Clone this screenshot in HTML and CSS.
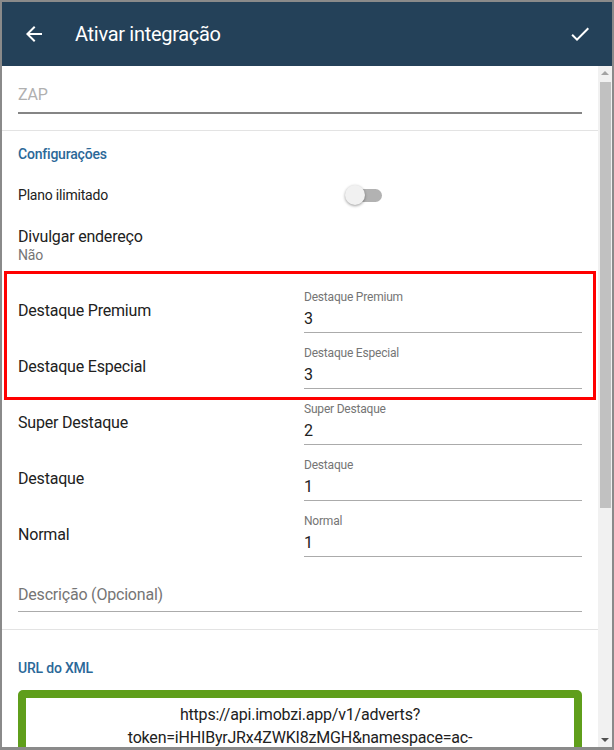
FILE: index.html
```html
<!DOCTYPE html>
<html lang="pt">
<head>
<meta charset="utf-8">
<link rel="stylesheet" href="styles.css">
</head>
<body>
<div class="frame">
  <header class="topbar">
    <svg class="icon" viewBox="0 0 24 24" width="24" height="24"><path fill="#fff" d="M20 11H7.83l5.59-5.59L12 4l-8 8 8 8 1.41-1.41L7.83 13H20v-2z"/></svg>
    <h1 class="title">Ativar integração</h1>
    <svg class="icon check" viewBox="0 0 24 24" width="24" height="24"><path fill="#fff" d="M9 16.17L4.83 12l-1.42 1.41L9 19 21 7l-1.41-1.41z"/></svg>
  </header>
  <div class="main">
    <div class="content">
      <div class="zap"><div class="zap-input">ZAP</div></div>
      <div class="divider"></div>
      <section class="config">
        <h2 class="section-title">Configurações</h2>
        <div class="plano-row">
          <span class="plano-label">Plano ilimitado</span>
          <span class="toggle"><span class="track"></span><span class="thumb"></span></span>
        </div>
        <div class="divulgar">
          <div class="divulgar-title">Divulgar endereço</div>
          <div class="divulgar-value">Não</div>
        </div>
        <div class="highlight">
          <div class="row"><div class="row-label">Destaque Premium</div><div class="field"><div class="field-label">Destaque Premium</div><div class="field-value">3</div></div></div>
          <div class="row"><div class="row-label">Destaque Especial</div><div class="field"><div class="field-label">Destaque Especial</div><div class="field-value">3</div></div></div>
        </div>
        <div class="row"><div class="row-label">Super Destaque</div><div class="field"><div class="field-label">Super Destaque</div><div class="field-value">2</div></div></div>
        <div class="row"><div class="row-label">Destaque</div><div class="field"><div class="field-label">Destaque</div><div class="field-value">1</div></div></div>
        <div class="row"><div class="row-label">Normal</div><div class="field"><div class="field-label">Normal</div><div class="field-value">1</div></div></div>
        <div class="desc">Descrição (Opcional)</div>
      </section>
      <div class="divider"></div>
      <section class="xml">
        <h2 class="section-title">URL do XML</h2>
        <div class="url-box">https://api.imobzi.app/v1/adverts?<br>token=iHHIByrJRx4ZWKI8zMGH&amp;namespace=ac-<br>fcec8311096e7b8cadvertsknadatsfcdtb8d6c81bcHAtcLLb7HVidObLi1k</div>
      </section>
    </div>
    <div class="scrollbar">
      <span class="arrow up"></span>
      <span class="thumb-bar"></span>
      <span class="spacer"></span>
      <span class="arrow down"></span>
    </div>
  </div>
</div>
</body>
</html>
```

FILE: styles.css
```css
* { box-sizing: border-box; }
html, body { margin: 0; padding: 0; }
body {
  background: #8a8a8a;
  font-family: Roboto, "Noto Sans", Arial, sans-serif;
  color: #212121;
  width: 614px;
  height: 750px;
  overflow: hidden;
  letter-spacing: -0.2px;
}
.frame {
  margin: 2px 2px 0 2px;
  height: 745px;
  background: #fff;
  display: flex;
  flex-direction: column;
  overflow: hidden;
}
.topbar {
  height: 64px;
  flex: 0 0 64px;
  background: #244159;
  display: flex;
  align-items: center;
  padding: 0 20px;
}
.icon { display: block; flex: 0 0 24px; }
.title {
  margin: 0 0 0 29px;
  font-size: 20px;
  font-weight: 400;
  color: #fff;
  flex: 1;
  line-height: 24px;
  letter-spacing: -0.3px;
}
.main {
  flex: 1;
  display: flex;
  overflow: hidden;
}
.content {
  flex: 1;
  overflow: hidden;
}
.scrollbar {
  flex: 0 0 14px;
  background: #f1f1f1;
  display: flex;
  flex-direction: column;
  align-items: center;
}
.arrow {
  width: 0; height: 0;
  border-left: 4px solid transparent;
  border-right: 4px solid transparent;
}
.arrow.up { border-bottom: 4px solid #a3a3a3; margin-top: 5px; }
.arrow.down { border-top: 4px solid #505050; margin-bottom: 5px; }
.thumb-bar {
  margin-top: 7px;
  width: 11px;
  height: 426px;
  background: #c1c1c1;
}
.spacer { flex: 1; }

.zap { padding: 18px 16px 0; height: 64px; }
.zap-input {
  font-size: 16px;
  line-height: 22px;
  color: #b0b0b0;
  padding-bottom: 6px;
  border-bottom: 2px solid #858585;
}
.divider { height: 1px; background: #e3e3e3; }

.config { padding: 13px 16px 0; }
.section-title {
  margin: 0;
  font-size: 14px;
  line-height: 20px;
  font-weight: 500;
  color: #2b6898;
}
.plano-row {
  margin-top: 7px;
  height: 48px;
  display: flex;
  align-items: center;
}
.plano-label { flex: 0 0 327px; font-size: 14px; }
.toggle {
  position: relative;
  width: 37px;
  height: 20px;
  display: block;
}
.track {
  position: absolute;
  left: 3px; top: 4px;
  width: 34px; height: 13px;
  border-radius: 7px;
  background: #b2b2b2;
}
.thumb {
  position: absolute;
  left: 0; top: 0;
  width: 20px; height: 20px;
  border-radius: 50%;
  background: #f1f1f1;
  box-shadow: 0 1px 3px rgba(0,0,0,0.4);
}
.divulgar { margin-top: 8px; }
.divulgar-title { font-size: 16px; line-height: 20px; }
.divulgar-value { font-size: 14px; line-height: 16px; color: #757575; }

.highlight { position: relative; margin-top: 19px; }
.highlight::before {
  content: "";
  position: absolute;
  left: -14px; right: -14px;
  top: -11px; bottom: -6px;
  border: 3px solid #f00;
  pointer-events: none;
}
.row {
  height: 56px;
  display: flex;
  align-items: center;
}
.row-label { flex: 1; font-size: 16px; }
.field {
  flex: 0 0 278px;
  align-self: flex-start;
  padding-top: 8px;
}
.field-label {
  font-size: 12px;
  line-height: 14px;
  color: #757575;
}
.field-value {
  font-size: 16px;
  line-height: 22px;
  padding-top: 4px;
  padding-bottom: 2px;
  border-bottom: 1px solid #ababab;
}
.desc {
  margin-top: 22px;
  font-size: 16px;
  line-height: 22px;
  color: #757575;
  padding-bottom: 5px;
  border-bottom: 1px solid #ababab;
  margin-bottom: 17px;
}
.xml { padding: 28px 16px 0; }
.url-box {
  margin-top: 12px;
  border: 8px solid #5f9e1b;
  border-radius: 5px;
  padding: 5px 8px 0;
  text-align: center;
  font-size: 16px;
  line-height: 23px;
  color: #212121;
  white-space: nowrap;
  overflow: hidden;
  height: 120px;
}
```
